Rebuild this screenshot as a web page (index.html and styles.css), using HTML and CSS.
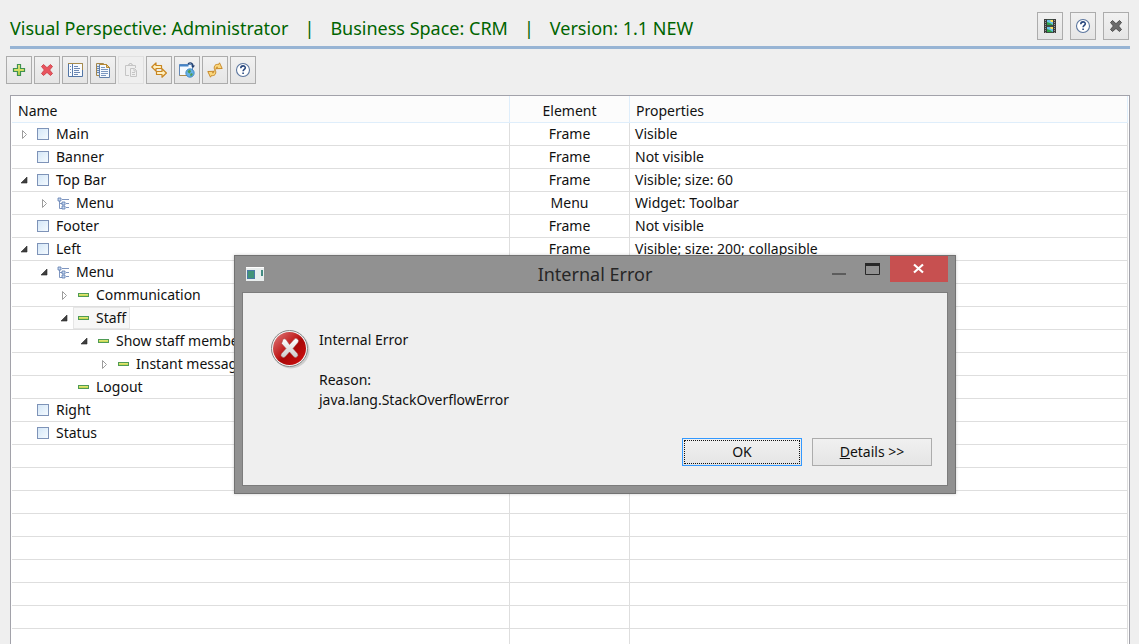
FILE: index.html
```html
<!DOCTYPE html>
<html lang="en">
<head>
<meta charset="utf-8">
<title>Visual Perspective: Administrator</title>
<link rel="stylesheet" href="styles.css">
</head>
<body>
<svg class="sprite" aria-hidden="true">
  <defs>
    <linearGradient id="sky" x1="0" y1="0" x2="1" y2="1"><stop offset="0" stop-color="#d3e6f7"/><stop offset="1" stop-color="#f6fbff"/></linearGradient>
    <linearGradient id="lime" x1="0" y1="0" x2="0" y2="1"><stop offset="0" stop-color="#f3f08a"/><stop offset="1" stop-color="#b5cf3c"/></linearGradient>
    <linearGradient id="red" x1="0" y1="0" x2="1" y2="1"><stop offset="0" stop-color="#e08080"/><stop offset=".45" stop-color="#c01c1c"/><stop offset=".55" stop-color="#a80808"/><stop offset="1" stop-color="#d40f0f"/></linearGradient>
    <linearGradient id="silver" x1="0" y1="0" x2="0" y2="1"><stop offset="0" stop-color="#ffffff"/><stop offset="1" stop-color="#cccccc"/></linearGradient>
    <symbol id="closed" viewBox="0 0 16 16"><path d="M6.500 4.500v8l4-4z" fill="#fff" stroke="#9c9c9c"/></symbol>
    <symbol id="open" viewBox="0 0 16 16"><path d="M11 5v6H5z" fill="#404040" stroke="#262626" stroke-width=".6"/></symbol>
    <symbol id="frame" viewBox="0 0 16 16"><rect x="2.5" y="2.5" width="11" height="11" fill="url(#sky)" stroke="#7e93b8"/></symbol>
    <symbol id="tree" viewBox="0 0 16 16"><path d="M4.500 3v10.500H8M4.500 8.500H8M7 4.500h7M11 8.500h3M11 12.500h3" fill="none" stroke="#7e95bf"/><path d="M3 3h3v3H3zM7 7h3v3H7zM7 11h3v3H7z" fill="#c5d7ee" stroke="#5d7bb0" stroke-width=".8"/></symbol>
    <symbol id="item" viewBox="0 0 16 16"><rect x="3.500" y="6.500" width="10" height="3" fill="url(#lime)" stroke="#4f9b55"/></symbol>
    <symbol id="help" viewBox="0 0 16 16"><circle cx="8" cy="8" r="6.500" fill="#fff" stroke="#5b769f" stroke-width="1.100"/><path d="M5.800 6.200c0-3 4.500-3 4.500-.5 0 1.600-2.200 1.700-2.200 3.500M8.100 10.500v1.600" fill="none" stroke="#2b4a80" stroke-width="1.600"/></symbol>
    <symbol id="cross" viewBox="0 0 16 16"><path d="M4.500 2.500 8 5.700l3.500-3.200 2 2L10.600 8l2.900 3.500-2 2L8 10.400l-3.500 3.100-2-2L5.400 8 2.500 4.500z" stroke-linejoin="round"/></symbol>
  </defs>
</svg>

<header class="banner">
  <h1 class="title"><span>Visual Perspective: Administrator</span><span>|</span><span>Business Space: CRM</span><span>|</span><span>Version: 1.1 NEW</span></h1>
  <div class="banner-tools">
    <button class="tool" type="button" aria-label="Preview"><svg class="icon" viewBox="0 0 16 16"><path d="M2 1h3v14H2zM11 1h3v14h-3z" fill="#3b3b3b"/><path d="M3.500 2v13M12.500 2v13" stroke="#9a9a9a" stroke-dasharray="1 1"/><path d="M5 2h6v5H5zM5 9h6v5H5z" fill="#6cc3ea"/><path d="M5 4l3 1 3 2H5zM5 11l3 1 3 2H5z" fill="#2da548"/><path d="M8 2h3v2H9zM8 9h3v2H9z" fill="#ffe05c"/><path d="M5 1.500h6M5 7.500h6M5 8.500h6M5 14.500h6" stroke="#3f5045"/></svg></button>
    <button class="tool" type="button" aria-label="Help"><svg class="icon"><use href="#help"/></svg></button>
    <button class="tool" type="button" aria-label="Close"><svg class="icon cross-grey"><use href="#cross"/></svg></button>
  </div>
</header>

<div class="toolbar" role="toolbar" aria-label="Actions">
  <button class="tool" type="button" aria-label="Add"><svg class="icon" viewBox="0 0 16 16"><path d="M6.500 2.500h3v4h4v3h-4v4h-3v-4h-4v-3h4z" fill="url(#lime)" stroke="#3f9250" stroke-width="1.200"/></svg></button>
  <button class="tool" type="button" aria-label="Delete"><svg class="icon cross-red"><use href="#cross"/></svg></button>
  <button class="tool" type="button" aria-label="Properties"><svg class="icon" viewBox="0 0 16 16"><path d="M1.500 1.500h14v13h-14z" fill="#f8fbff" stroke="#5275a5"/><path d="M1 1.500h14.500V8" fill="none" stroke="#a88b4b"/><path d="M5.500 2v12" stroke="#587aab"/><path d="M7 4.500h4M7 6.500h6M7 8.500h5M7 10.500h6M7 12.500h4M3 4.500h1M3 7.500h1M3 10.500h1" stroke="#6d89b4"/></svg></button>
  <button class="tool" type="button" aria-label="Copy"><svg class="icon" viewBox="0 0 16 16"><path d="M1.500 1.500h7v12h-7z" fill="#dce9f6" stroke="#a4864a"/><path d="M2 4.500h3M2 6.500h3M2 8.500h3M2 10.500h3" stroke="#6685b4"/><path d="M4.500 2.500h7l3 3v10h-10z" fill="#f5faff" stroke="#6280aa"/><path d="M4.500 2.500h7l3 3" fill="none" stroke="#b88832"/><path d="M11.500 2.500v3h3z" fill="#efd08a" stroke="#b88832"/><path d="M6 5.500h4M6 7.500h7M6 9.500h7M6 11.500h7M6 13.500h5" stroke="#7b97c0"/></svg></button>
  <button class="tool" type="button" aria-label="Paste" disabled><svg class="icon" viewBox="0 0 16 16"><path d="M6 13.500H2.500v-10h10V6M5.500 4V2.500h1v-1h2v1h1V4M7.500 6.500h4l2 2v6h-6zM11 7v2h2M9 10.500h3M9 12.500h3" fill="none" stroke="#c5c5c5"/></svg></button>
  <button class="tool" type="button" aria-label="Swap"><svg class="icon" viewBox="0 0 16 16"><path d="M5 .8v2.700h5.500v3H5v2.700L.8 5zM11 6.800v2.700H5.500v3H11v2.700L15.400 11z" fill="#fff0c0" stroke="#c98620" stroke-width="1.200" stroke-linejoin="round"/></svg></button>
  <button class="tool" type="button" aria-label="Open in browser"><svg class="icon" viewBox="0 0 16 16"><path d="M.5 2.500h13v11H.5z" fill="#f5faff" stroke="#6489b8"/><path d="M.5 2.500h9v2h-9z" fill="#4484c7"/><path d="M.5 13.500h9" stroke="#aa8b4b"/><path d="M9 2c2-2 5-1 5 2" fill="none" stroke="#203f70" stroke-width="1.300"/><path d="M11.800 3.500h4.200L14 6z" fill="#203f70"/><circle cx="11" cy="11" r="4.200" fill="#64b0e6" stroke="#347ebc" stroke-width=".8"/><path d="M8.500 9l2.500-1.500 1 2-1.500 2-1.500-1zM12 11l2 1-2 2.500-1-1.500z" fill="#4b9c55"/></svg></button>
  <button class="tool" type="button" aria-label="Refresh"><svg class="icon" viewBox="0 0 16 16"><path d="M7.500 7.500C6.500 4 8.500 1.800 11.500 2.500L12.500.8l2.700 5.700-5.700.2 1-1.700c-1-.2-1.500.5-1 1.800zM8.500 8.500c1 3.500-1 5.700-4 5l-1 1.700L.8 9.500l5.700-.2-1 1.700c1 .2 1.500-.5 1-1.800z" fill="#fbd77c" stroke="#c88a2b" stroke-linejoin="round"/></svg></button>
  <button class="tool" type="button" aria-label="Help"><svg class="icon"><use href="#help"/></svg></button>
</div>

<main class="panel">
  <table class="grid">
    <colgroup><col><col class="col-element"><col></colgroup>
    <thead><tr><th scope="col">Name</th><th scope="col">Element</th><th scope="col">Properties</th></tr></thead>
    <tbody>
      <tr><td><div class="node"><button class="twist" type="button" aria-label="Expand Main"><svg class="icon"><use href="#closed"/></svg></button><span class="label"><svg class="icon"><use href="#frame"/></svg>Main</span></div></td><td>Frame</td><td>Visible</td></tr>
      <tr><td><div class="node"><span class="twist"></span><span class="label"><svg class="icon"><use href="#frame"/></svg>Banner</span></div></td><td>Frame</td><td>Not visible</td></tr>
      <tr><td><div class="node"><button class="twist" type="button" aria-label="Collapse Top Bar"><svg class="icon"><use href="#open"/></svg></button><span class="label"><svg class="icon"><use href="#frame"/></svg>Top Bar</span></div></td><td>Frame</td><td>Visible; size: 60</td></tr>
      <tr><td><div class="node level-1"><button class="twist" type="button" aria-label="Expand Menu"><svg class="icon"><use href="#closed"/></svg></button><span class="label"><svg class="icon"><use href="#tree"/></svg>Menu</span></div></td><td>Menu</td><td>Widget: Toolbar</td></tr>
      <tr><td><div class="node"><span class="twist"></span><span class="label"><svg class="icon"><use href="#frame"/></svg>Footer</span></div></td><td>Frame</td><td>Not visible</td></tr>
      <tr><td><div class="node"><button class="twist" type="button" aria-label="Collapse Left"><svg class="icon"><use href="#open"/></svg></button><span class="label"><svg class="icon"><use href="#frame"/></svg>Left</span></div></td><td>Frame</td><td>Visible; size: 200; collapsible</td></tr>
      <tr><td><div class="node level-1"><button class="twist" type="button" aria-label="Collapse Menu"><svg class="icon"><use href="#open"/></svg></button><span class="label"><svg class="icon"><use href="#tree"/></svg>Menu</span></div></td><td></td><td></td></tr>
      <tr><td><div class="node level-2"><button class="twist" type="button" aria-label="Expand Communication"><svg class="icon"><use href="#closed"/></svg></button><span class="label"><svg class="icon"><use href="#item"/></svg>Communication</span></div></td><td></td><td></td></tr>
      <tr><td><div class="node level-2"><button class="twist" type="button" aria-label="Collapse Staff"><svg class="icon"><use href="#open"/></svg></button><span class="label selected"><svg class="icon"><use href="#item"/></svg>Staff</span></div></td><td></td><td></td></tr>
      <tr><td><div class="node level-3"><button class="twist" type="button" aria-label="Collapse Show staff members"><svg class="icon"><use href="#open"/></svg></button><span class="label"><svg class="icon"><use href="#item"/></svg>Show staff members</span></div></td><td></td><td></td></tr>
      <tr><td><div class="node level-4"><button class="twist" type="button" aria-label="Expand Instant message"><svg class="icon"><use href="#closed"/></svg></button><span class="label"><svg class="icon"><use href="#item"/></svg>Instant message</span></div></td><td></td><td></td></tr>
      <tr><td><div class="node level-2"><span class="twist"></span><span class="label"><svg class="icon"><use href="#item"/></svg>Logout</span></div></td><td></td><td></td></tr>
      <tr><td><div class="node"><span class="twist"></span><span class="label"><svg class="icon"><use href="#frame"/></svg>Right</span></div></td><td></td><td></td></tr>
      <tr><td><div class="node"><span class="twist"></span><span class="label"><svg class="icon"><use href="#frame"/></svg>Status</span></div></td><td></td><td></td></tr>
      <tr><td></td><td></td><td></td></tr>
      <tr><td></td><td></td><td></td></tr>
      <tr><td></td><td></td><td></td></tr>
      <tr><td></td><td></td><td></td></tr>
      <tr><td></td><td></td><td></td></tr>
      <tr><td></td><td></td><td></td></tr>
      <tr><td></td><td></td><td></td></tr>
      <tr><td></td><td></td><td></td></tr>
      <tr><td></td><td></td><td></td></tr>
      <tr><td></td><td></td><td></td></tr>
    </tbody>
  </table>
</main>

<section class="dialog" role="dialog" aria-labelledby="dialog-title">
  <div class="titlebar">
    <svg class="app-icon" viewBox="0 0 18 16"><path d="M0 1h18v14H0z" fill="#e9eeee"/><path d="M0 1.500h18" stroke="#fff"/><path d="M1 4h8v9H1z" fill="#4b79a5"/><path d="M2 5h6v7H2z" fill="#429378"/><path d="M15 4h2v6h-2z" fill="#438b82"/></svg>
    <h2 class="dialog-title" id="dialog-title">Internal Error</h2>
    <div class="window-buttons">
      <button class="win" type="button" aria-label="Minimize"><svg class="icon" viewBox="0 0 16 16"><path d="M1 12h14v2H1z" fill="#5c5c5c"/></svg></button>
      <button class="win" type="button" aria-label="Maximize"><svg class="icon" viewBox="0 0 16 16"><path d="M.5 2.500h14v11H.5z" fill="none" stroke="#282828"/><path d="M0 2h15v3H0z" fill="#282828"/></svg></button>
      <button class="win close" type="button" aria-label="Close"><svg class="icon" viewBox="0 0 16 16"><path d="M3 3.500l9 8M12 3.500l-9 8" stroke="#fff" stroke-width="2.200"/></svg></button>
    </div>
  </div>
  <div class="dialog-body">
    <div class="message">
      <svg class="error-icon" viewBox="0 0 40 40"><circle cx="21" cy="20" r="18.500" fill="#b8b8b8" opacity=".6"/><circle cx="19.500" cy="18.500" r="18" fill="#f4f4f4" stroke="#858585"/><circle cx="19.500" cy="18.500" r="16.500" fill="url(#red)"/><path d="M12.500 11a2 2 0 0 1 3.500-1.500l3.500 5 4.500-5a2.300 2.300 0 0 1 4 3l-5 6 4.500 5a2.300 2.300 0 0 1-4 3l-4-4.500-4 4.500a2.300 2.300 0 0 1-4-3l4.500-5-4.500-5z" fill="url(#silver)" stroke="#a04040" stroke-width=".5"/></svg>
      <div class="message-text"><p>Internal Error</p><p>Reason:<br>java.lang.StackOverflowError</p></div>
    </div>
    <div class="actions">
      <button class="button default" type="button">OK</button>
      <button class="button" type="button"><u>D</u>etails &gt;&gt;</button>
    </div>
  </div>
</section>
</body>
</html>
```
FILE: styles.css
```css
* { box-sizing: border-box; }

body {
  display: flex;
  flex-direction: column;
  height: 100vh;
  margin: 0;
  overflow: hidden;
  background: #efefef;
  color: #111;
  font: 14px/20px "Noto Sans", "Open Sans", sans-serif;
}

button { font: inherit; color: inherit; }
.sprite { position: absolute; width: 0; height: 0; }
.icon { display: block; flex: none; width: 16px; height: 16px; }

.banner {
  display: flex;
  justify-content: space-between;
  align-items: flex-start;
  flex: none;
  margin: 0 9px 0 10px;
  padding: 12px 1px 2px 0;
  border-bottom: 3px solid #97b4d4;
}
.title {
  display: flex;
  gap: 16px;
  margin: 0;
  color: #006400;
  font-size: 18px;
  font-weight: 400;
  line-height: 32px;
  white-space: nowrap;
}
.banner-tools { display: flex; gap: 7px; }

.toolbar {
  display: flex;
  flex: none;
  gap: 2px;
  padding: 7px 6px 11px;
}
.tool {
  display: grid;
  place-items: center;
  width: 26px;
  height: 28px;
  padding: 0;
  border: 1px solid #acacac;
  background: linear-gradient(#f1f1f1, #e5e5e5);
}
.tool:disabled { border-color: #e0e0e0; background: #efefef; }
.cross-red { fill: #e9545e; stroke: #cf4850; }
.cross-grey { fill: #6b6b6b; stroke: #505050; }

.panel {
  flex: 1;
  min-height: 0;
  margin: 0 9px 0 10px;
  padding: 0 1px;
  overflow: hidden;
  border: 1px solid #a2a2aa;
  border-bottom: 0;
  background: #fff;
}
.grid {
  width: 100%;
  border-collapse: separate;
  border-spacing: 0;
  table-layout: fixed;
}
.col-element { width: 120px; }
.grid th {
  height: 27px;
  padding: 3px 6px 0;
  border: solid #dfeefb;
  border-width: 0 1px 1px 0;
  background: #fcfcfc;
  font-weight: 400;
  text-align: left;
}
.grid td {
  height: 23px;
  padding: 0 5px;
  border: solid #dedede;
  border-width: 0 1px 1px 0;
  white-space: nowrap;
}
.grid td:first-child { padding: 0 4px; }
.grid th:nth-child(2), .grid td:nth-child(2) { text-align: center; }

.node { display: flex; align-items: center; gap: 1px; height: 22px; }
.level-1 { padding-left: 20px; }
.level-2 { padding-left: 40px; }
.level-3 { padding-left: 60px; }
.level-4 { padding-left: 80px; }
.twist { flex: none; width: 16px; height: 16px; padding: 0; border: 0; background: none; }
.label {
  display: flex;
  align-items: center;
  gap: 5px;
  height: 22px;
  padding: 0 4px 0 2px;
}
.selected { background: #f7f7f7; box-shadow: inset 0 0 0 1px #e6e6e6; }

.dialog {
  position: absolute;
  top: 255px;
  left: 234px;
  width: 722px;
  padding: 0 7px 7px;
  border: 1px solid #727272;
  background: #919191;
  box-shadow: 0 0 3px rgba(0, 0, 0, .2);
}
.titlebar {
  display: grid;
  grid-template-columns: 140px 1fr 140px;
  align-items: start;
  height: 36px;
}
.app-icon { width: 18px; height: 16px; margin: 10px 4px; }
.dialog-title {
  margin: 0;
  color: #262626;
  font-size: 18px;
  font-weight: 400;
  line-height: 36px;
  text-align: center;
}
.window-buttons { display: flex; justify-content: flex-end; }
.win {
  display: grid;
  place-items: center;
  width: 34px;
  height: 26px;
  padding: 0;
  border: 0;
  background: none;
}
.close { width: 58px; background: #c75050; }
.dialog-body {
  padding: 37px 15px 19px 27px;
  border: 1px solid #7c7c7c;
  background: #efefef;
}
.message { display: flex; gap: 9px; }
.error-icon { flex: none; width: 40px; height: 40px; }
.message-text p { margin: 0 0 20px; }
.actions { display: flex; justify-content: flex-end; gap: 10px; margin-top: 8px; }
.button {
  width: 120px;
  height: 28px;
  padding: 0;
  border: 1px solid #acacac;
  background: linear-gradient(#f0f0f0, #e5e5e5);
}
.default { border-color: #3399ff; outline: 1px dotted #111; outline-offset: -3px; }
```
